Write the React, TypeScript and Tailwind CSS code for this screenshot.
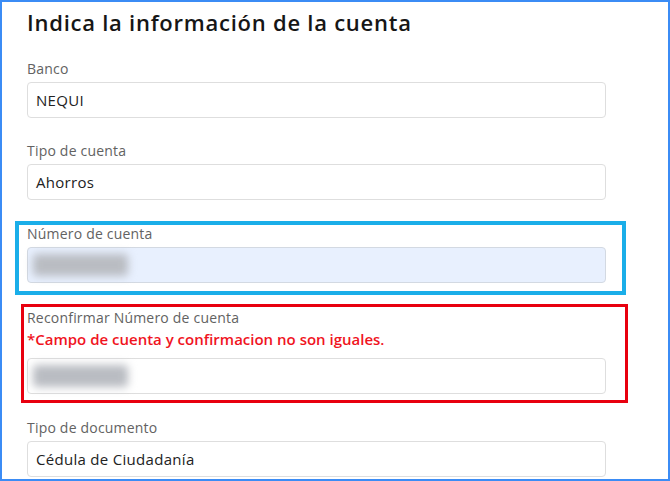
import React from 'react';

type FieldProps = {
  label: string;
  value?: string;
  blurred?: boolean;
  autofill?: boolean;
  error?: string;
  className?: string;
  children?: React.ReactNode;
};

const Field: React.FC<FieldProps> = ({ label, value, blurred, autofill, error, className = '', children }) => (
  <div className={`relative ${className}`}>
    {children}
    <label className="block text-[14px] leading-[20px] tracking-[0.2px] text-[#626262]">{label}</label>
    {error && (
      <p className="mt-[1px] mb-[9px] text-[15px] leading-[20px] font-semibold text-[#f0141e]">{error}</p>
    )}
    <div
      className={`mt-[3px] flex h-[36px] items-center rounded-[4px] border px-[8px] text-[15px] tracking-[0.3px] text-[#222] ${
        autofill ? 'border-[#d3d9e2] bg-[#e8f0fe]' : 'border-[#dedede] bg-white'
      }`}
    >
      {blurred ? (
        <div className="-ml-[3px] h-[22px] w-[95px] rounded-[4px] bg-[#b9bcc2] blur-[4px]" />
      ) : (
        <span>{value}</span>
      )}
    </div>
  </div>
);

const App: React.FC = () => {
  return (
    <div
      className="h-[481px] w-[670px] overflow-hidden border-2 border-[#3b8cf5] bg-white"
      style={{ fontFamily: '"Open Sans", "Liberation Sans", sans-serif' }}
    >
      <div className="w-[604px] pl-[25px] pt-[6px]">
        <h1 className="text-[22px] leading-[28px] font-semibold tracking-[0.75px] text-[#161616]">
          Indica la información de la cuenta
        </h1>

        <Field className="mt-[23px]" label="Banco" value="NEQUI" />
        <Field className="mt-[23px]" label="Tipo de cuenta" value="Ahorros" />

        {/* highlighted: account number */}
        <Field className="mt-[24px]" label="Número de cuenta" blurred autofill>
          <div className="pointer-events-none absolute -top-[3px] -left-[12px] -right-[20px] -bottom-[12px] border-4 border-[#1aaee9]" />
        </Field>

        {/* highlighted: confirmation mismatch */}
        <Field
          className="mt-[25px]"
          label="Reconfirmar Número de cuenta"
          error="*Campo de cuenta y confirmacion no son iguales."
          blurred
        >
          <div className="pointer-events-none absolute -top-[4px] -left-[6px] -right-[22px] -bottom-[9px] border-[3px] border-[#e8000f]" />
        </Field>

        <Field className="mt-[24px]" label="Tipo de documento" value="Cédula de Ciudadanía" />
      </div>
    </div>
  );
};

export default App;
